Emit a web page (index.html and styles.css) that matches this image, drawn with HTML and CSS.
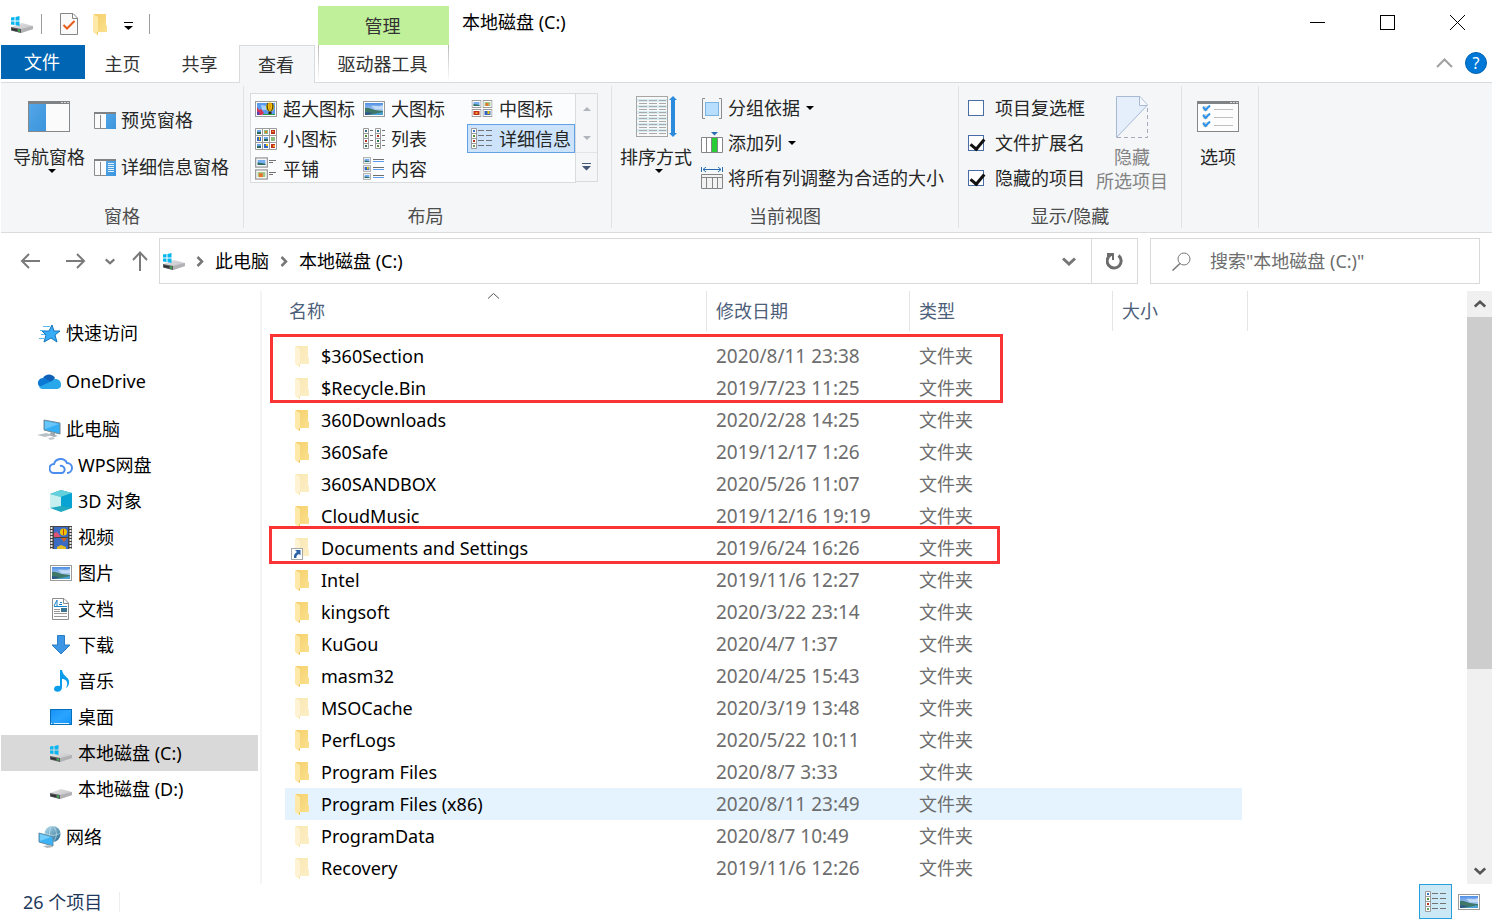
FILE: index.html
```
<!DOCTYPE html>
<html lang="zh-CN">
<head>
<meta charset="utf-8">
<title>本地磁盘 (C:)</title>
<link rel="stylesheet" href="styles.css">
</head>
<body>
<svg class="defs" aria-hidden="true">
  <defs>
    <linearGradient id="g-folder" x1="0" y1="0" x2="1" y2="1"><stop offset="0" stop-color="#f5d06c"/><stop offset="1" stop-color="#fbe08e"/></linearGradient>
    <linearGradient id="g-blue" x1="0" y1="0" x2="1" y2="1"><stop offset="0" stop-color="#54a6e6"/><stop offset="1" stop-color="#3b94dd"/></linearGradient>
    <linearGradient id="g-sky" x1="0" y1="0" x2="0" y2="1"><stop offset="0" stop-color="#4f8fe6"/><stop offset="1" stop-color="#e4f3fb"/></linearGradient>
    <linearGradient id="g-drive" x1="0" y1="0" x2="1" y2="1"><stop offset="0" stop-color="#e4e4e6"/><stop offset="1" stop-color="#bcbcc0"/></linearGradient>
    <linearGradient id="g-desk" x1="0" y1="0" x2="1" y2="1"><stop offset="0" stop-color="#1591f5"/><stop offset=".5" stop-color="#2ba4ff"/><stop offset="1" stop-color="#1193fa"/></linearGradient>
    <linearGradient id="g-globe" x1="0" y1="0" x2="1" y2="1"><stop offset="0" stop-color="#b8e0f0"/><stop offset="1" stop-color="#24688f"/></linearGradient>

    <symbol id="drive" viewBox="0 0 22 11">
      <path d="M0 5 11 1 22 4V7L10 11 0 8.500Z" fill="url(#g-drive)"/>
      <path d="M0 5 10 7V11L0 8.500Z" fill="#55575a"/><path d="M10 7 22 4V7L10 11Z" fill="#b2b2b5"/>
      <path d="M1 6.500 6 7.500V9L1 8Z" fill="#2c2e2f"/><rect x="7" y="7.500" width="2" height="2" fill="#36b34a"/>
    </symbol>
    <symbol id="windrive" viewBox="0 0 22 17">
      <use href="#drive" y="6" width="22" height="11"/>
      <path d="M0 1.500 3.500 1V4.500H0ZM4.500 1 8.500 0V4.500H4.500ZM0 5.500H3.500V9L0 8.500ZM4.500 5.500H8.500V10L4.500 9Z" fill="#08b5f0"/>
    </symbol>
    <symbol id="folder" viewBox="0 0 14 21">
      <path d="M1 0H13V11L14 12V18H1Z" fill="url(#g-folder)"/>
      <path d="M0 0 5 3V20L4 21 0 18Z" fill="#ffe9a9"/><path d="M5 3V18H4V21L5 20.500Z" fill="#efc75f"/>
    </symbol>
    <symbol id="picture" viewBox="0 0 22 16">
      <rect x=".5" y=".5" width="21" height="15" fill="#fff" stroke="#9b9b9b"/>
      <rect x="2" y="2" width="18" height="12" fill="url(#g-sky)"/>
      <path d="M2 7C5 6 8 8 12 9L20 10V14H2Z" fill="#3f7868"/><path d="M6 14 20 11V14Z" fill="#4aa0cf"/><path d="M2 11 10 12 4 14H2Z" fill="#2d5a8c"/>
      <path d="M8 5C12 4 15 6 20 4V8H12Z" fill="#fff" opacity=".5"/>
    </symbol>
    <symbol id="balloon" viewBox="0 0 22 16">
      <rect x=".5" y=".5" width="21" height="15" fill="#fff" stroke="#9b9b9b"/>
      <rect x="2" y="2" width="18" height="12" fill="#5a9bf0"/><path d="M6 4 12 5 11 9H7Z" fill="#a9d0fa"/>
      <path d="M2 6 4 9 6 8 9 12 7 14H2Z" fill="#da3651"/><path d="M2 10 5 12 4 14H2Z" fill="#5b3fb5"/>
      <ellipse cx="15" cy="6" rx="4" ry="4.500" fill="#f0c500"/><path d="M13 2C11 6 13 9 14 10M17 2C19 6 17 9 16 10" stroke="#312410" fill="none"/>
      <path d="M15 2V9" stroke="#e07a1c"/><rect x="13.500" y="10.500" width="3" height="3" fill="#2b210f"/><path d="M8 13H20V14H8Z" fill="#2b9d41"/>
    </symbol>
    <symbol id="thumb-a" viewBox="0 0 10 8"><rect x=".5" y=".5" width="9" height="7" fill="#fff" stroke="#9b9b9b"/><rect x="2" y="2" width="6" height="4" fill="#76acf0"/><path d="M2 4 8 5V6H2Z" fill="#2f6f5d"/></symbol>
    <symbol id="thumb-b" viewBox="0 0 10 8"><rect x=".5" y=".5" width="9" height="7" fill="#fff" stroke="#9b9b9b"/><rect x="2" y="2" width="6" height="4" fill="#a2c98d"/><rect x="3" y="3" width="3" height="3" fill="#e3782a"/></symbol>
    <symbol id="thumb-c" viewBox="0 0 10 8"><rect x=".5" y=".5" width="9" height="7" fill="#fff" stroke="#9b9b9b"/><rect x="2" y="2" width="6" height="4" fill="#c1301c"/><rect x="4" y="3" width="2" height="2" fill="#f49b28"/></symbol>
    <symbol id="thumb-d" viewBox="0 0 10 8"><rect x=".5" y=".5" width="9" height="7" fill="#fff" stroke="#9b9b9b"/><rect x="2" y="2" width="6" height="4" fill="#3465c4"/><rect x="5" y="2" width="2" height="3" fill="#f0c500"/></symbol>
    <symbol id="medium" viewBox="0 0 21 17"><use href="#thumb-a" width="10" height="8"/><use href="#thumb-b" x="11" width="10" height="8"/><use href="#thumb-c" y="9" width="10" height="8"/><use href="#thumb-d" x="11" y="9" width="10" height="8"/></symbol>
    <symbol id="small" viewBox="0 0 22 22">
      <path d="M.5.500H21.500V21.500H.5ZM7.500 0V22M14.500 0V22M0 7.500H22M0 14.500H22" fill="#fff" stroke="#9b9b9b"/>
      <path d="M2 2H6V4H2ZM9 9H13V11H9ZM2 16H6V18H2Z" fill="#69a5e8"/><path d="M2 4H6V6H2ZM9 11H13V13H9ZM2 18H6V20H2Z" fill="#2c6656"/>
      <path d="M9 2H13V6H9ZM16 9H20V13H16Z" fill="#8cbb80"/><path d="M10 3H12V5H10Z" fill="#e3782a"/><path d="M16 2H20V6H16ZM16 16H20V20H16Z" fill="#c1301c"/><path d="M17 3H19V4H17ZM18 17H20V19H18Z" fill="#f3a12c"/><path d="M2 9H6V13H2ZM9 16H13V20H9Z" fill="#3465c4"/><path d="M4 9H5V12H4ZM11 16H13V18H11Z" fill="#f0c500"/>
    </symbol>
    <symbol id="list" viewBox="0 0 22 21">
      <path d="M.5.500H5.500V20.500H.5ZM12.500.500H17.500V20.500H12.500ZM0 5.500H6M0 10.500H6M0 15.500H6M12 5.500H18M12 10.500H18M12 15.500H18" fill="#fff" stroke="#9b9b9b"/>
      <path d="M7 2.500H10M7 7.500H10M7 12.500H10M7 17.500H10M19 2.500H22M19 7.500H22M19 12.500H22M19 17.500H22" stroke="#737373"/>
      <path d="M2 2H4V4H2ZM14 2H16V4H14Z" fill="#356f8c"/><path d="M2 7H4V9H2ZM14 17H16V19H14Z" fill="#5a8e3c"/><path d="M2 12H4V14H2ZM14 7H16V9H14Z" fill="#b23120"/><path d="M2 17H4V19H2ZM14 12H16V14H14Z" fill="#386f4f"/>
    </symbol>
    <symbol id="details" viewBox="0 0 22 21">
      <path d="M.5.500H5.500V20.500H.5ZM0 5.500H6M0 10.500H6M0 15.500H6" fill="#fff" stroke="#9b9b9b"/>
      <path d="M7 2.500H13M15 2.500H21M7 7.500H13M15 7.500H21M7 12.500H13M15 12.500H21M7 17.500H13M15 17.500H21" stroke="#737373"/>
      <path d="M2 2H4V4H2Z" fill="#3b73c4"/><path d="M2 7H4V9H2Z" fill="#5a8e3c"/><path d="M2 12H4V14H2Z" fill="#b23120"/><path d="M2 17H4V19H2Z" fill="#6c9e5c"/>
    </symbol>
    <symbol id="tiles" viewBox="0 0 22 23"><use href="#thumb-a" width="13" height="11"/><use href="#thumb-b" y="12" width="13" height="11"/><path d="M14 3.500H21M14 5.500H18M14 15.500H21M14 17.500H18" stroke="#737373"/></symbol>
    <symbol id="content" viewBox="0 0 22 23"><use href="#thumb-a" width="8" height="7"/><use href="#thumb-d" y="8" width="8" height="7"/><use href="#thumb-a" y="16" width="8" height="7"/><path d="M10 2.500H21M10 10.500H21M10 18.500H21" stroke="#6e6e6e"/><path d="M10 4.500H21M10 12.500H21M10 20.500H21" stroke="#5c9bf0"/></symbol>
    <symbol id="page-check" viewBox="0 0 18 22"><path d="M.5.500H13L17.500 5V21.500H.5Z" fill="#fafafa" stroke="#858585"/><path d="M12.500.500V5.500H17.500" fill="none" stroke="#858585"/><path d="M3.500 12 7 15.500 14.500 8" fill="none" stroke="#ea5b19" stroke-width="2"/></symbol>
    <symbol id="chev-d" viewBox="0 0 14 9"><path d="M1 1.500 7 7 13 1.500" fill="none" stroke="currentColor" stroke-width="3"/></symbol>
    <symbol id="chev-r" viewBox="0 0 8 11"><path d="M1.500 1 6 5.500 1.500 10" fill="none" stroke="#767676" stroke-width="2.500"/></symbol>
  </defs>
</svg>

<div class="window">
  <header class="titlebar">
    <div class="quick">
      <svg class="q-drive" width="22" height="17"><use href="#windrive"/></svg>
      <span class="q-sep"></span>
      <button class="plain q-prop" aria-label="属性"><svg width="18" height="22"><use href="#page-check"/></svg></button>
      <button class="plain q-folder" aria-label="新建文件夹"><svg width="14" height="21"><use href="#folder"/></svg></button>
      <button class="plain q-more" aria-label="自定义快速访问工具栏"><svg width="9" height="8" viewBox="0 0 9 8"><path d="M0 0H9V1H0ZM0 4H9L4.500 8Z"/></svg></button>
      <span class="q-sep"></span>
    </div>
    <div class="context">管理</div>
    <h1 class="title">本地磁盘 (C:)</h1>
    <div class="controls">
      <button class="plain" aria-label="最小化"><svg width="15" height="15" viewBox="0 0 15 15"><path d="M0 7.500H15" stroke="#000"/></svg></button>
      <button class="plain" aria-label="最大化"><svg width="15" height="15" viewBox="0 0 15 15"><rect x=".5" y=".5" width="14" height="14" fill="none" stroke="#000"/></svg></button>
      <button class="plain" aria-label="关闭"><svg width="15" height="15" viewBox="0 0 15 15"><path d="M0 0 15 15M15 0 0 15" stroke="#000"/></svg></button>
    </div>
  </header>

  <nav class="tabs">
    <button class="tab file">文件</button>
    <button class="tab">主页</button>
    <button class="tab">共享</button>
    <button class="tab active">查看</button>
    <button class="tab tools">驱动器工具</button>
    <div class="tab-end">
      <button class="plain" aria-label="最小化功能区"><svg width="17" height="10" viewBox="0 0 17 10"><path d="M1 9 8.500 1.500 16 9" fill="none" stroke="#a0a0a0" stroke-width="2"/></svg></button>
      <button class="help" aria-label="帮助">?</button>
    </div>
  </nav>

  <section class="ribbon">
    <div class="group g-panes">
      <div class="group-body">
        <button class="big">
          <svg width="42" height="31" viewBox="0 0 42 31"><rect x=".5" y=".5" width="41" height="30" fill="#fbfbfb" stroke="#858789"/><path d="M0 0H42V3H0Z" fill="#808386"/><path d="M33 1H35V2H33ZM36 1H38V2H36ZM39 1H41V2H39Z" fill="#d8d8d8"/><path d="M1 3H18V30H1Z" fill="url(#g-blue)"/></svg>
          <span>导航窗格</span><i class="caret"></i>
        </button>
        <div class="stack wide">
          <button class="small"><svg width="22" height="17" viewBox="0 0 22 17"><path d="M.5.500H21.500V16.500H.5ZM6.500 3V16" fill="#fbfbfb" stroke="#8a8c8e"/><path d="M0 0H22V2H0Z" fill="#808386"/><path d="M12 2H22V17H12Z" fill="url(#g-blue)"/></svg><span>预览窗格</span></button>
          <button class="small"><svg width="22" height="17" viewBox="0 0 22 17"><path d="M.5.500H21.500V16.500H.5ZM6.500 3V16" fill="#fbfbfb" stroke="#8a8c8e"/><path d="M0 0H22V2H0Z" fill="#808386"/><path d="M12 2H22V17H12Z" fill="url(#g-blue)"/><path d="M14 4.500H20M14 6.500H20M14 8.500H20M14 10.500H20M14 12.500H20" stroke="#e3f1fc"/></svg><span>详细信息窗格</span></button>
        </div>
      </div>
      <div class="group-label">窗格</div>
    </div>

    <div class="group g-layout">
      <div class="group-body">
        <div class="gallery">
          <button class="view"><svg width="22" height="16"><use href="#balloon"/></svg>超大图标</button>
          <button class="view"><svg width="22" height="16"><use href="#picture"/></svg>大图标</button>
          <button class="view"><svg width="22" height="17"><use href="#medium"/></svg>中图标</button>
          <button class="view"><svg width="22" height="22"><use href="#small"/></svg>小图标</button>
          <button class="view"><svg width="22" height="21"><use href="#list"/></svg>列表</button>
          <button class="view chosen"><svg width="22" height="21"><use href="#details"/></svg>详细信息</button>
          <button class="view"><svg width="22" height="23"><use href="#tiles"/></svg>平铺</button>
          <button class="view"><svg width="22" height="23"><use href="#content"/></svg>内容</button>
        </div>
        <div class="gallery-nav">
          <button class="plain" aria-label="上一行"><svg width="8" height="4" viewBox="0 0 8 4"><path d="M0 4 4 0 8 4Z" fill="#b0b5bd"/></svg></button>
          <button class="plain" aria-label="下一行"><svg width="8" height="4" viewBox="0 0 8 4"><path d="M0 0 4 4 8 0Z" fill="#b0b5bd"/></svg></button>
          <button class="plain" aria-label="更多"><svg width="9" height="8" viewBox="0 0 9 8"><path d="M0 0H9V1H0ZM0 3H9L4.500 7.500Z" fill="#445877"/></svg></button>
        </div>
      </div>
      <div class="group-label">布局</div>
    </div>

    <div class="group g-current">
      <div class="group-body">
        <button class="big">
          <svg width="42" height="42" viewBox="0 0 42 42"><rect x="1.500" y=".5" width="31" height="40" fill="#f8f8f8" stroke="#a6a6a6"/><path d="M2 3H32V6H2ZM2 9H32V12H2ZM2 15H32V18H2ZM2 21H32V24H2ZM2 27H32V30H2ZM2 33H32V36H2Z" fill="#d8ebf1"/><path d="M4 4.500H31M4 7.500H31M4 10.500H31M4 13.500H31M4 16.500H31M4 19.500H31M4 22.500H31M4 25.500H31M4 28.500H31M4 31.500H31M4 34.500H31M4 37.500H31" stroke="#a9a9a9" stroke-dasharray="8 2"/><path d="M38 0 42 4H40V37H42L38 41 34 37H36V4H34Z" fill="#2c8bdc"/></svg>
          <span>排序方式</span><i class="caret"></i>
        </button>
        <div class="stack">
          <button class="small"><svg width="22" height="21" viewBox="0 0 22 21"><path d="M4 .5H1.500V20.500H4M18 .5H20.500V20.500H18" fill="none" stroke="#8c8c8c"/><rect x="4.500" y="4.500" width="13" height="13" fill="#b8dfff" stroke="#78b4e2"/></svg><span>分组依据</span><i class="caret"></i></button>
          <button class="small"><svg width="22" height="22" viewBox="0 0 22 22"><path d="M.5 5.500H21.500V20.500H.5ZM5.500 5V21M10.500 5V21M16.500 5V21" fill="#fff" stroke="#858585"/><path d="M11 6H16V20H11Z" fill="#28cc34"/><path d="M10 0H17L13.500 3.500Z" fill="#286eae"/></svg><span>添加列</span><i class="caret"></i></button>
          <button class="small"><svg width="22" height="22" viewBox="0 0 22 22"><path d="M.5 0V5M21.500 0V5M2 2.500H20M5 0 2 2.500 5 5M17 0 20 2.500 17 5" fill="none" stroke="#286eae"/><path d="M.5 7.500H21.500V21.500H.5ZM5.500 10V22M11.500 10V22M16.500 10V22M0 10.500H22" fill="#f3f3f3" stroke="#858585"/></svg><span>将所有列调整为合适的大小</span></button>
        </div>
      </div>
      <div class="group-label">当前视图</div>
    </div>

    <div class="group g-show">
      <div class="group-body">
        <div class="stack">
          <label class="check"><input type="checkbox">项目复选框</label>
          <label class="check"><input type="checkbox" checked>文件扩展名</label>
          <label class="check"><input type="checkbox" checked>隐藏的项目</label>
        </div>
        <button class="big" disabled>
          <svg width="32" height="42" viewBox="0 0 32 42"><path d="M.5.500H24L31.500 9 .5 41.500Z" fill="#e5eefb" stroke="#a9b9d2"/><path d="M23.500.500V9.500H31.500" fill="#f5f8fd" stroke="#a9b9d2"/><path d="M31.500 12V41.500H1" fill="none" stroke="#a5abbc" stroke-dasharray="4 3"/></svg>
          <span>隐藏<br>所选项目</span>
        </button>
      </div>
      <div class="group-label">显示/隐藏</div>
    </div>

    <div class="group g-options">
      <div class="group-body">
        <button class="big">
          <svg width="42" height="31" viewBox="0 0 42 31"><rect x=".5" y=".5" width="41" height="30" fill="#fdfdfd" stroke="#858789"/><path d="M0 0H42V3H0Z" fill="#808386"/><path d="M33 1H35V2H33ZM36 1H38V2H36ZM39 1H41V2H39Z" fill="#d8d8d8"/><path d="M17 8.500H36M17 16.500H36M17 24.500H36" stroke="#bfbfbf"/><path d="M6 5H11V10H6ZM6 13H11V18H6ZM6 21H11V26H6Z" fill="#d9dde0"/><path d="M6 6 8.500 9 13 4.500M6 14 8.500 17 13 12.500M6 22 8.500 25 13 20.500" fill="none" stroke="#2c93e8" stroke-width="2"/></svg>
          <span>选项</span>
        </button>
      </div>
    </div>
  </section>

  <div class="location">
    <div class="history">
      <button class="plain" aria-label="后退"><svg width="20" height="16" viewBox="0 0 20 16"><path d="M20 8H2M9 1 2 8 9 15" fill="none" stroke="#7a7a7a" stroke-width="2"/></svg></button>
      <button class="plain fwd" aria-label="前进"><svg width="20" height="16" viewBox="0 0 20 16"><path d="M0 8H18M11 1 18 8 11 15" fill="none" stroke="#7a7a7a" stroke-width="2"/></svg></button>
      <button class="plain recent" aria-label="最近浏览的位置"><svg width="10" height="7"><use href="#chev-d"/></svg></button>
      <button class="plain up" aria-label="上移"><svg width="16" height="20" viewBox="0 0 16 20"><path d="M8 20V2M1 9 8 1.500 15 9" fill="none" stroke="#7a7a7a" stroke-width="2"/></svg></button>
    </div>
    <div class="address">
      <svg width="22" height="17"><use href="#windrive"/></svg>
      <svg class="crumb-sep" width="8" height="11"><use href="#chev-r"/></svg>
      <a href="#pc">此电脑</a>
      <svg class="crumb-sep" width="8" height="11"><use href="#chev-r"/></svg>
      <a href="#c">本地磁盘 (C:)</a>
      <button class="plain drop" aria-label="以前的位置"><svg width="14" height="9"><use href="#chev-d"/></svg></button>
      <button class="plain refresh" aria-label="刷新"><svg width="17" height="18" viewBox="0 0 17 18"><path d="M12.500 3.500A7 7 0 1 1 4.500 3" fill="none" stroke="#6c6c6c" stroke-width="3"/><path d="M1 1H8V8H6V4H1Z" fill="#6c6c6c"/></svg></button>
    </div>
    <div class="search">
      <svg width="19" height="19" viewBox="0 0 19 19"><circle cx="12" cy="7" r="6" fill="none" stroke="#777"/><path d="M8 11.500.500 18.500" stroke="#777" stroke-width="1.500"/></svg>
      <input type="text" aria-label="搜索" placeholder="搜索&quot;本地磁盘 (C:)&quot;">
    </div>
  </div>

  <div class="body">
    <nav class="tree">
      <a class="node top" href="#quick"><svg width="22" height="19" viewBox="0 0 22 19"><path d="M13 1 15 7H21L16 11 18 18 12 14 5 18 7 11 3 7H10Z" fill="#38acf5" stroke="#1674bd"/><path d="M4 2.500H11M1 6.500H6M2 10.500H6M0 14.500H5" stroke="#5ab8ed"/></svg>快速访问</a>
      <a class="node top" href="#onedrive"><svg width="24" height="16" viewBox="0 0 24 16"><path d="M6 5A7 7 0 0 1 18 5L14 11 5 8Z" fill="#0d5fb8"/><path d="M5 15A5 5 0 1 1 7 5L15 9 5 15Z" fill="#0c7ad5"/><path d="M15 8C18 4 24 7 24 11A4 4 0 0 1 20 16H5A5 5 0 0 1 2 14Z" fill="#28a8ea"/></svg>OneDrive</a>
      <a class="node top" href="#pc"><svg width="24" height="21" viewBox="0 0 24 21"><path d="M7 1 23 4V15L7 11Z" fill="#34aef5" stroke="#748892"/><path d="M8 2 22 5 8 10Z" fill="#67c6fa"/><path d="M14 13 18 14V16L21 17 17 18 12 16Z" fill="#9ea9af"/><path d="M0 16 9 14 16 16 8 18Z" fill="#b7c0c5"/><path d="M11 19 16 18 18 20 13 21Z" fill="#c1c8cc"/></svg>此电脑</a>
      <a class="node child" href="#wps"><svg width="24" height="20" viewBox="0 0 24 20"><path d="M11 11A3.500 3.500 0 0 1 13 18H5A4.500 4.500 0 0 1 5 9 7 7 0 0 1 18 8 5 5 0 0 1 18 18" fill="none" stroke="#4b8dee" stroke-width="2"/></svg>WPS网盘</a>
      <a class="node child" href="#3d"><svg width="24" height="22" viewBox="0 0 24 22"><path d="M1 4 12 0 23 3V18L12 22 1 18Z" fill="#20a9bf"/><path d="M1 4 12 0 23 3 12 7Z" fill="#63d0dc"/><path d="M1 4 12 7V16L1 18Z" fill="#c7eff0"/><path d="M12 7 23 3V18L12 16Z" fill="#08a3d2"/></svg>3D 对象</a>
      <a class="node child" href="#video"><svg width="24" height="23" viewBox="0 0 24 23"><path d="M1 0H23V23H1Z" fill="#444"/><path d="M2.500 1V23M21.500 1V23" stroke="#e4e4e4" stroke-width="2" stroke-dasharray="2 1"/><path d="M5 1H19V11H5ZM5 12H19V23H5Z" fill="#3b6cc4"/><path d="M5 7 8 6 12 11H5Z" fill="#e15372"/><circle cx="14.500" cy="6" r="3.500" fill="#f0c500"/><path d="M14.500 3V9" stroke="#c9401c"/><path d="M12 12H18L15 16Z" fill="#d26124"/><path d="M8 21 12 19 17 21V23H8Z" fill="#e6bd21"/></svg>视频</a>
      <a class="node child" href="#pictures"><svg width="24" height="16"><use href="#picture"/></svg>图片</a>
      <a class="node child" href="#docs"><svg width="24" height="22" viewBox="0 0 24 22"><path d="M3.500.500H15L19.500 5V21.500H3.500Z" fill="#fff" stroke="#8d8d8d"/><path d="M14.500.500V5.500H19.500" fill="none" stroke="#8d8d8d"/><path d="M5 8 8 2V8M11 4.500H13M10 6.500H13M5 8.500H18" fill="none" stroke="#1e82ca"/><path d="M5 11.500H11M5 13.500H11M5 15.500H18M5 18.500H18" stroke="#989898"/><path d="M12 10H18V14H12Z" fill="#3c738f"/></svg>文档</a>
      <a class="node child" href="#downloads"><svg width="24" height="20" viewBox="0 0 24 20"><path d="M8.500.500H15.500V10H21L12 19 3 10H8.500Z" fill="#3d96e4" stroke="#2a7dc7"/></svg>下载</a>
      <a class="node child" href="#music"><svg width="24" height="22" viewBox="0 0 24 22"><path d="M11 0H13C14 7 21 7 20 13 20 15 18 18 17 18 20 12 17 9 13 9V17C13 23 5 23 5 19 5 16 8 15 11 16Z" fill="#0c9cec"/></svg>音乐</a>
      <a class="node child" href="#desktop"><svg width="24" height="17" viewBox="0 0 24 17"><rect x="1.500" y=".5" width="21" height="15" fill="url(#g-desk)" stroke="#0870b8"/><path d="M2 14.500H22" stroke="#e0f3ff" stroke-dasharray="1 2 15 2"/></svg>桌面</a>
      <a class="node child current" href="#c"><svg width="24" height="17"><use href="#windrive"/></svg>本地磁盘 (C:)</a>
      <a class="node child" href="#d"><svg class="low" width="24" height="11"><use href="#drive"/></svg>本地磁盘 (D:)</a>
      <a class="node top net" href="#network"><svg width="24" height="22" viewBox="0 0 24 22"><circle cx="15.500" cy="8" r="8" fill="url(#g-globe)"/><path d="M8 7C13 10 19 10 23 7M15 0C11 5 12 12 16 16M16 0C21 5 20 12 16 16" fill="none" stroke="#d1edf6" opacity=".6"/><path d="M2 7 16 11V20L2 16Z" fill="#3bb3f6" stroke="#638da3"/><path d="M3 8 14 11 3 15Z" fill="#73cdfb"/><path d="M6 20 14 19 16 21 10 22Z" fill="#aeb7bb"/></svg>网络</a>
    </nav>

    <main class="files">
      <table>
        <colgroup><col class="c-name"><col class="c-date"><col class="c-type"><col class="c-size"></colgroup>
        <thead><tr><th>名称<svg class="sort" width="11" height="6" viewBox="0 0 11 6"><path d="M0 5.500 5.500.500 11 5.500" fill="none" stroke="#555"/></svg></th><th>修改日期</th><th>类型</th><th>大小</th></tr></thead>
        <tbody>
          <tr class="hid"><td><svg width="14" height="21"><use href="#folder"/></svg>$360Section</td><td class="date">2020/8/11 23:38</td><td>文件夹</td><td></td></tr>
          <tr class="hid"><td><svg width="14" height="21"><use href="#folder"/></svg>$Recycle.Bin</td><td class="date">2019/7/23 11:25</td><td>文件夹</td><td></td></tr>
          <tr><td><svg width="14" height="21"><use href="#folder"/></svg>360Downloads</td><td class="date">2020/2/28 14:25</td><td>文件夹</td><td></td></tr>
          <tr><td><svg width="14" height="21"><use href="#folder"/></svg>360Safe</td><td class="date">2019/12/17 1:26</td><td>文件夹</td><td></td></tr>
          <tr class="hid"><td><svg width="14" height="21"><use href="#folder"/></svg>360SANDBOX</td><td class="date">2020/5/26 11:07</td><td>文件夹</td><td></td></tr>
          <tr><td><svg width="14" height="21"><use href="#folder"/></svg>CloudMusic</td><td class="date">2019/12/16 19:19</td><td>文件夹</td><td></td></tr>
          <tr class="hid"><td><svg width="14" height="21"><use href="#folder"/></svg><svg class="link" width="12" height="12" viewBox="0 0 12 12"><rect x=".5" y=".5" width="11" height="11" fill="#fff" stroke="#a8a8a8"/><path d="M4 2H9.500V7.500L8 6C6 7 5 8 5.500 10H3C2.500 7 4 5 6 4Z" fill="#2b62a5"/></svg>Documents and Settings</td><td class="date">2019/6/24 16:26</td><td>文件夹</td><td></td></tr>
          <tr><td><svg width="14" height="21"><use href="#folder"/></svg>Intel</td><td class="date">2019/11/6 12:27</td><td>文件夹</td><td></td></tr>
          <tr><td><svg width="14" height="21"><use href="#folder"/></svg>kingsoft</td><td class="date">2020/3/22 23:14</td><td>文件夹</td><td></td></tr>
          <tr><td><svg width="14" height="21"><use href="#folder"/></svg>KuGou</td><td class="date">2020/4/7 1:37</td><td>文件夹</td><td></td></tr>
          <tr><td><svg width="14" height="21"><use href="#folder"/></svg>masm32</td><td class="date">2020/4/25 15:43</td><td>文件夹</td><td></td></tr>
          <tr class="hid"><td><svg width="14" height="21"><use href="#folder"/></svg>MSOCache</td><td class="date">2020/3/19 13:48</td><td>文件夹</td><td></td></tr>
          <tr><td><svg width="14" height="21"><use href="#folder"/></svg>PerfLogs</td><td class="date">2020/5/22 10:11</td><td>文件夹</td><td></td></tr>
          <tr><td><svg width="14" height="21"><use href="#folder"/></svg>Program Files</td><td class="date">2020/8/7 3:33</td><td>文件夹</td><td></td></tr>
          <tr class="hover"><td><svg width="14" height="21"><use href="#folder"/></svg>Program Files (x86)</td><td class="date">2020/8/11 23:49</td><td>文件夹</td><td></td></tr>
          <tr class="hid"><td><svg width="14" height="21"><use href="#folder"/></svg>ProgramData</td><td class="date">2020/8/7 10:49</td><td>文件夹</td><td></td></tr>
          <tr class="hid"><td><svg width="14" height="21"><use href="#folder"/></svg>Recovery</td><td class="date">2019/11/6 12:26</td><td>文件夹</td><td></td></tr>
        </tbody>
      </table>
      <div class="mark mark-a"></div>
      <div class="mark mark-b"></div>
    </main>

    <div class="scroll">
      <button class="plain" aria-label="向上滚动"><svg class="flip" width="12" height="8"><use href="#chev-d"/></svg></button>
      <div class="track"><div class="thumb"></div></div>
      <button class="plain" aria-label="向下滚动"><svg width="12" height="8"><use href="#chev-d"/></svg></button>
    </div>
  </div>

  <footer class="status">
    <span class="count">26 个项目</span>
    <div class="modes">
      <button class="mode on" aria-label="详细信息视图"><svg width="22" height="21"><use href="#details"/></svg></button>
      <button class="mode" aria-label="大图标视图"><svg width="22" height="16"><use href="#picture"/></svg></button>
    </div>
  </footer>
</div>
</body>
</html>
```
FILE: styles.css
```
* { box-sizing: border-box; }

body {
  margin: 0;
  background: #fff;
  color: #000;
  font: 18px/24px "Noto Sans", "Noto Sans CJK SC", sans-serif;
}

button, input { font: inherit; color: inherit; }
svg { display: block; flex: none; }
a { color: inherit; text-decoration: none; }
.defs { position: absolute; width: 0; height: 0; }

.window {
  display: flex;
  flex-direction: column;
  min-height: 100vh;
  padding: 0 1px;
}

.plain {
  display: flex;
  align-items: center;
  justify-content: center;
  padding: 0;
  border: 0;
  background: none;
}

/* Title bar */
.titlebar { display: flex; height: 45px; }
.quick { display: flex; align-items: center; width: 317px; padding: 3px 0 0 10px; }
.q-sep { width: 1px; height: 20px; background: #9c9c9c; }
.q-drive { margin-right: 8px; }
.q-prop { margin-left: 18px; }
.q-folder { margin-left: 15px; }
.q-more { margin: 4px 16px 0 17px; }
.context {
  width: 131px;
  margin-top: 6px;
  padding-right: 2px;
  background: #c0f09a;
  color: #333;
  line-height: 40px;
  text-align: center;
}
.title { margin: 0 0 0 13px; font-size: 18px; font-weight: 400; line-height: 44px; }
.controls { display: flex; margin-left: auto; }
.controls .plain { width: 70px; }

/* Ribbon tabs */
.tabs { display: flex; height: 38px; border-bottom: 1px solid #dadbdc; }
.tab { width: 77px; padding: 0 2px 0 0; border: 0; background: none; color: #333; line-height: 34px; }
.tab.file { width: 84px; height: 34px; background: #0066b4; color: #fff; }
.tab.active { width: 76px; height: 38px; border: 1px solid #dadbdc; border-bottom: 0; background: #f4f6f8; }
.tab.tools {
  width: 131px;
  margin-left: 3px;
  background: linear-gradient(#b8b8b8, #fff) left / 1px 100% no-repeat, linear-gradient(#b8b8b8, #fff) right / 1px 100% no-repeat;
}
.tab-end { display: flex; align-items: center; gap: 12px; margin-left: auto; padding: 0 5px 2px 0; }
.help {
  width: 22px;
  height: 22px;
  padding: 0;
  border: 1px solid #0063b1;
  border-radius: 50%;
  background: #0078d7;
  color: #fff;
  font-size: 16px;
  line-height: 20px;
}

/* Ribbon */
.ribbon { display: flex; padding: 3px 0 4px; border-bottom: 1px solid #dadbdc; background: #f4f6f8; color: #262626; }
.group { display: flex; flex-direction: column; border-right: 1px solid #e1e2e4; }
.group-body { display: flex; height: 118px; }
.group-label { height: 24px; color: #4d4d4d; line-height: 24px; text-align: center; }
.g-panes { width: 243px; }
.g-panes .group-body { padding-left: 8px; }
.g-layout { width: 368px; }
.g-layout .group-body { padding-left: 6px; }
.g-layout .group-label { padding-right: 4px; }
.g-current { width: 347px; }
.g-current .group-body { padding-left: 4px; }
.g-show { width: 223px; }
.g-show .group-body { padding-left: 9px; }
.g-options { width: 77px; }

.big {
  display: flex;
  flex-direction: column;
  align-items: center;
  width: 80px;
  padding: 15px 0 0;
  border: 0;
  background: none;
  white-space: nowrap;
}
.big svg { margin-bottom: 13px; }
.g-current .big { padding-top: 10px; }
.g-current .big svg { margin-bottom: 7px; }
.g-show .big { padding-top: 10px; margin-left: 7px; color: #838383; }
.g-show .big svg { margin-bottom: 7px; }
.g-options .big { width: 72px; }
.caret { border: 4px solid transparent; border-top-color: #000; border-bottom: 0; }
.big .caret { margin-left: 5px; }
.small .caret { margin-left: 1px; }

.stack { display: flex; flex-direction: column; gap: 11px; padding-top: 10px; }
.stack.wide { gap: 23px; padding: 22px 0 0 5px; }
.small { display: flex; align-items: center; gap: 5px; height: 24px; padding: 0; border: 0; background: none; white-space: nowrap; }
.g-current .stack { padding-left: 5px; }

.gallery {
  display: grid;
  grid-template-columns: repeat(3, 108px);
  grid-auto-rows: 29px;
  height: 90px;
  margin-top: 7px;
  border: 1px solid #dadbdc;
  background: #fbfcfe;
  row-gap: 1px;
}
.view { display: flex; align-items: center; gap: 6px; padding: 0 3px; border: 1px solid transparent; background: none; line-height: 22px; white-space: nowrap; }
.view.chosen { border-color: #62a2e4; background: #cce3fb; }
.gallery-nav { display: grid; grid-template-rows: repeat(3, 1fr); width: 22px; height: 89px; margin-top: 7px; border: 1px solid #dadbdc; border-left: 0; }
.gallery-nav .plain:last-child { border-top: 1px solid #e3e4e6; }

.check { display: flex; align-items: center; gap: 11px; height: 24px; white-space: nowrap; }
.check input { appearance: none; width: 16px; height: 16px; margin: 0; border: 1px solid #4a6da7; background: #fff; }
.check input:checked::before {
  content: "";
  display: block;
  width: 6px;
  height: 11px;
  margin: 0 0 0 4px;
  border: solid #111;
  border-width: 0 3px 3px 0;
  transform: rotate(40deg);
}

/* Address row */
.location { display: flex; padding: 5px 12px 7px 0; }
.history { display: flex; align-items: center; width: 158px; padding-left: 19px; }
.history .fwd { margin-left: 26px; }
.history .recent { margin: 0 17px 0 19px; color: #767676; }
.address { display: flex; flex: 1; align-items: center; height: 46px; padding-left: 3px; border: 1px solid #d9d9d9; }
.crumb-sep { margin: 0 11px; }
.address a { line-height: 44px; }
.drop { width: 44px; margin-left: auto; color: #767676; }
.refresh { align-self: stretch; width: 46px; border-left: 1px solid #d9d9d9; }
.search { display: flex; align-items: center; width: 330px; margin-left: 12px; padding-left: 21px; border: 1px solid #d9d9d9; }
.search input { flex: 1; min-width: 0; margin-left: 19px; padding: 0; border: 0; outline: 0; background: none; }
.search input::placeholder { color: #6d6d6d; opacity: 1; }

/* Body */
.body { display: flex; flex: 1; }
.tree { width: 261px; padding: 24px 2px 0 0; border-right: 2px solid #f4f4f4; }
.node { display: flex; align-items: center; height: 36px; gap: 5px; white-space: nowrap; }
.node.top { padding-left: 36px; }
.node.top:nth-child(-n+2) { margin-bottom: 12px; }
.node.child { padding-left: 48px; }
.node.net { margin-top: 12px; }
.node.current { background: #d9d9d9; }
.node .low { margin-top: 8px; }
.node svg[width="22"] { margin: 0 0 0 2px; }

.files { position: relative; flex: 1; padding-left: 23px; }
.files table { border-collapse: separate; border-spacing: 0; table-layout: fixed; width: 963px; }
.c-name { width: 422px; }
.c-date, .c-type { width: 203px; }
.c-size { width: 135px; }
.files th { position: relative; height: 40px; padding: 0 0 0 9px; border-right: 1px solid #e5e5e5; color: #4c607a; font-weight: 400; text-align: left; }
.files th:first-child { padding-left: 4px; }
.sort { position: absolute; top: 2px; left: 203px; }
.files tbody::before { content: ""; display: block; height: 9px; }
.files td { position: relative; height: 32px; padding: 0 0 0 9px; color: #6d6d6d; }
.files td:first-child { padding-left: 36px; color: #000; }
.files .date { font-size: 19px; }
.files td svg { position: absolute; top: 6px; left: 10px; }
.files .hid td svg { opacity: .5; }
.files .hid td .link { top: 16px; left: 6px; opacity: 1; }
.files .hover td { background: #e5f3ff; }
.files .hover td:last-child { background: linear-gradient(#e5f3ff, #e5f3ff) left / 129px 100% no-repeat; }

.mark { position: absolute; border: 3px solid #fa3434; pointer-events: none; }
.mark-a { top: 43px; left: 8px; width: 733px; height: 69px; }
.mark-b { top: 235px; left: 7px; width: 731px; height: 38px; }

.scroll { display: flex; flex-direction: column; width: 25px; background: #f0f0f0; color: #555; }
.scroll .plain { height: 26px; }
.track { flex: 1; }
.thumb { height: 65%; background: #cdcdcd; }
.flip { transform: rotate(180deg); }

/* Status bar */
.status { display: flex; align-items: center; height: 37px; padding-bottom: 2px; }
.count { padding: 0 17px 0 22px; border-right: 1px solid #eee; color: #1e395b; line-height: 20px; }
.modes { display: flex; margin-left: auto; padding-right: 7px; }
.mode { display: flex; align-items: center; justify-content: center; width: 33px; height: 35px; padding: 0; border: 1px solid transparent; background: none; }
.mode.on { border-color: #26a0da; background: #cbe8f6; }
```
